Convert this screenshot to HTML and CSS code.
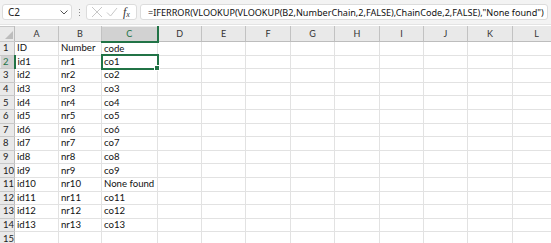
FILE: index.html
```html
<!DOCTYPE html>
<html lang="en">
<head>
    <meta charset="UTF-8">
    <title>Book1 - Excel</title>
    <link rel="stylesheet" href="styles.css">
</head>
<body>
    <div class="formula-bar">
        <div class="name-box">
            <span>C2</span>
            <svg class="caret" width="8" height="5" viewBox="0 0 8 5"><path d="M0.5 0.5 L4 4 L7.5 0.5" fill="none" stroke="#555" stroke-width="1"/></svg>
        </div>
        <div class="grip"><i></i><i></i><i></i></div>
        <div class="fx-box">
            <svg width="12" height="12" viewBox="0 0 12 12"><path d="M1 1 L11 11 M11 1 L1 11" stroke="#c8c8c8" stroke-width="1"/></svg>
            <svg width="12" height="12" viewBox="0 0 12 12"><path d="M1 6.5 L4.5 10 L11 2" fill="none" stroke="#c8c8c8" stroke-width="1"/></svg>
            <span class="fx">f<sub>x</sub></span>
        </div>
        <div class="formula">=IFERROR(VLOOKUP(VLOOKUP(B2,NumberChain,2,FALSE),ChainCode,2,FALSE),"None found")</div>
    </div>

    <table class="sheet">
        <colgroup>
            <col class="c-row">
            <col class="c-a"><col class="c-b"><col class="c-c"><col class="c-d">
            <col class="c-e"><col class="c-f"><col class="c-g"><col class="c-h">
            <col class="c-i"><col class="c-j"><col class="c-k"><col class="c-l">
        </colgroup>
        <tr class="col-heads">
            <th class="corner"><svg width="8" height="8" viewBox="0 0 8 8"><path d="M8 0 L8 8 L0 8 Z" fill="#bdbdbd"/></svg></th>
            <th>A</th><th>B</th><th class="sel">C</th><th>D</th><th>E</th><th>F</th>
            <th>G</th><th>H</th><th>I</th><th>J</th><th>K</th><th>L</th>
        </tr>
        <tr><th>1</th><td>ID</td><td>Number</td><td>code</td><td></td><td></td><td></td><td></td><td></td><td></td><td></td><td></td><td></td></tr>
        <tr><th class="sel">2</th><td>id1</td><td>nr1</td><td class="active">co1<span class="handle"></span></td><td></td><td></td><td></td><td></td><td></td><td></td><td></td><td></td><td></td></tr>
        <tr><th>3</th><td>id2</td><td>nr2</td><td>co2</td><td></td><td></td><td></td><td></td><td></td><td></td><td></td><td></td><td></td></tr>
        <tr><th>4</th><td>id3</td><td>nr3</td><td>co3</td><td></td><td></td><td></td><td></td><td></td><td></td><td></td><td></td><td></td></tr>
        <tr><th>5</th><td>id4</td><td>nr4</td><td>co4</td><td></td><td></td><td></td><td></td><td></td><td></td><td></td><td></td><td></td></tr>
        <tr><th>6</th><td>id5</td><td>nr5</td><td>co5</td><td></td><td></td><td></td><td></td><td></td><td></td><td></td><td></td><td></td></tr>
        <tr><th>7</th><td>id6</td><td>nr6</td><td>co6</td><td></td><td></td><td></td><td></td><td></td><td></td><td></td><td></td><td></td></tr>
        <tr><th>8</th><td>id7</td><td>nr7</td><td>co7</td><td></td><td></td><td></td><td></td><td></td><td></td><td></td><td></td><td></td></tr>
        <tr><th>9</th><td>id8</td><td>nr8</td><td>co8</td><td></td><td></td><td></td><td></td><td></td><td></td><td></td><td></td><td></td></tr>
        <tr><th>10</th><td>id9</td><td>nr9</td><td>co9</td><td></td><td></td><td></td><td></td><td></td><td></td><td></td><td></td><td></td></tr>
        <tr><th>11</th><td>id10</td><td>nr10</td><td>None found</td><td></td><td></td><td></td><td></td><td></td><td></td><td></td><td></td><td></td></tr>
        <tr><th>12</th><td>id11</td><td>nr11</td><td>co11</td><td></td><td></td><td></td><td></td><td></td><td></td><td></td><td></td><td></td></tr>
        <tr><th>13</th><td>id12</td><td>nr12</td><td>co12</td><td></td><td></td><td></td><td></td><td></td><td></td><td></td><td></td><td></td></tr>
        <tr><th>14</th><td>id13</td><td>nr13</td><td>co13</td><td></td><td></td><td></td><td></td><td></td><td></td><td></td><td></td><td></td></tr>
        <tr><th>15</th><td></td><td></td><td></td><td></td><td></td><td></td><td></td><td></td><td></td><td></td><td></td><td></td></tr>
    </table>
</body>
</html>
```

FILE: styles.css
```css
/* Page */
body {
    margin: 0;
    width: 551px;
    height: 243px;
    overflow: hidden;
    background: #fff;
    font-family: 'Lato', 'Liberation Sans', sans-serif;
}

/* Formula bar */
.formula-bar {
    display: flex;
    align-items: center;
    height: 24px;
    padding: 0 3px 0 2px;
    background: #f3f3f3;
    border-bottom: 1px solid #e4e4e4;
    margin-bottom: 1px;
}

.name-box {
    width: 70px;
    height: 16px;
    box-sizing: border-box;
    display: flex;
    align-items: center;
    justify-content: space-between;
    padding: 0 3px 0 5px;
    background: #fff;
    border: 1px solid #dcdcdc;
    border-radius: 3px;
    font-family: 'Noto Sans', sans-serif;
    font-size: 10px;
    color: #222;
}

.grip {
    width: 14px;
    display: flex;
    flex-direction: column;
    align-items: center;
    gap: 2px;
}

.grip i {
    width: 1px;
    height: 1px;
    background: #8a8a8a;
}

.fx-box {
    width: 51px;
    height: 16px;
    box-sizing: border-box;
    display: flex;
    align-items: center;
    gap: 3px;
    padding: 0 3px 0 4px;
    background: #fff;
    border: 1px solid #dcdcdc;
    border-radius: 3px;
}

.fx {
    margin-left: 2px;
    font-family: 'Liberation Serif', serif;
    font-style: italic;
    font-size: 12px;
    color: #333;
}

.fx sub {
    font-size: 8px;
    vertical-align: -1px;
}

.formula {
    flex: 1;
    height: 16px;
    margin-left: 3px;
    box-sizing: border-box;
    padding: 1px 0 0 7px;
    background: #fff;
    border: 1px solid #dcdcdc;
    border-radius: 3px;
    font-family: 'Noto Sans', sans-serif;
    font-size: 9.1px;
    line-height: 13px;
    color: #111;
    white-space: nowrap;
    overflow: hidden;
}

/* Grid */
.sheet {
    border-collapse: collapse;
    table-layout: fixed;
    width: 560px;
    font-size: 9.6px;
    color: #111;
}

.c-row { width: 14px; }
.c-a { width: 44px; }
.c-b { width: 43px; }
.c-c { width: 56px; }
.c-d { width: 44px; }
.c-e { width: 44px; }
.c-f { width: 45px; }
.c-g { width: 44px; }
.c-h { width: 45px; }
.c-i { width: 44px; }
.c-j { width: 44px; }
.c-k { width: 45px; }
.c-l { width: 48px; }

.sheet tr {
    height: 13.6px;
}

.sheet td {
    padding: 0 0 0 2px;
    border: 1px solid #e2e2e2;
    white-space: nowrap;
    overflow: visible;
    line-height: 12px;
    position: relative;
}

.sheet th {
    padding: 0;
    background: #e9e9e9;
    font-weight: normal;
    color: #333;
    border: 1px solid #d0d0d0;
    line-height: 12px;
}

.col-heads th {
    height: 13px;
    font-size: 9px;
    border-color: #e9e9e9 #c2c2c2 #bdbdbd #c2c2c2;
}

.col-heads th.corner {
    text-align: right;
    vertical-align: bottom;
    padding: 0 1px 1px 0;
    line-height: 8px;
}

.col-heads th.sel {
    background: #d2d2d2;
    color: #217346;
    border-bottom: 2px solid #217346;
}

tr > th:first-child {
    text-align: left;
    padding-left: 2px;
    font-size: 9.5px;
    color: #222;
    border-color: #c8c8c8 #bdbdbd #c8c8c8 #e9e9e9;
}

tr > th.sel {
    background: #d2d2d2;
    color: #217346;
    border-right: 2px solid #217346;
}

/* Active cell */
.sheet td.active {
    outline: 2px solid #217346;
    outline-offset: -1px;
}

.handle {
    position: absolute;
    right: -3px;
    bottom: -3px;
    width: 4px;
    height: 4px;
    background: #217346;
    border: 1px solid #fff;
}
```
